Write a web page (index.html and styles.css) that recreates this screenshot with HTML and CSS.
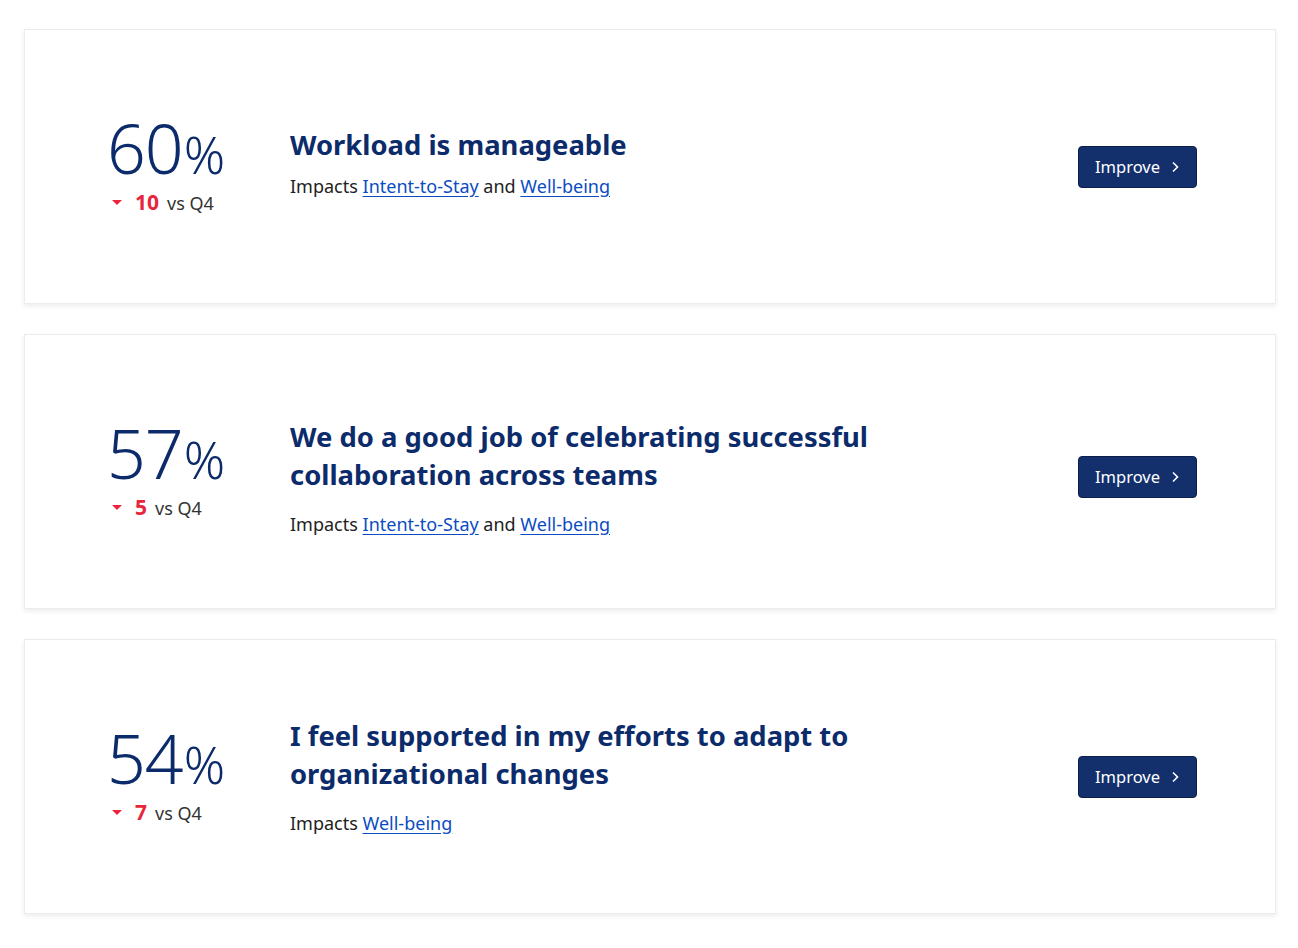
FILE: index.html
```html
<!DOCTYPE html>
<html>
<head>
<meta charset="utf-8">
<link rel="stylesheet" href="styles.css">
</head>
<body>
<div class="list">
  <div class="card">
    <div class="score">
      <div class="pct"><span class="num">60</span><span class="sign">%</span></div>
      <div class="delta"><span class="tri"></span><span class="dval">10</span><span class="vs">vs Q4</span></div>
    </div>
    <div class="body">
      <h2 class="title">Workload is manageable</h2>
      <p class="impacts">Impacts <a href="#">Intent-to-Stay</a> and <a href="#">Well-being</a></p>
    </div>
    <button class="btn">Improve <svg width="10" height="12" viewBox="0 0 10 12"><path d="M3 1.5 L7.5 6 L3 10.5" fill="none" stroke="#fff" stroke-width="1.6"/></svg></button>
  </div>
  <div class="card">
    <div class="score">
      <div class="pct"><span class="num">57</span><span class="sign">%</span></div>
      <div class="delta"><span class="tri"></span><span class="dval">5</span><span class="vs">vs Q4</span></div>
    </div>
    <div class="body">
      <h2 class="title">We do a good job of celebrating successful collaboration across teams</h2>
      <p class="impacts">Impacts <a href="#">Intent-to-Stay</a> and <a href="#">Well-being</a></p>
    </div>
    <button class="btn">Improve <svg width="10" height="12" viewBox="0 0 10 12"><path d="M3 1.5 L7.5 6 L3 10.5" fill="none" stroke="#fff" stroke-width="1.6"/></svg></button>
  </div>
  <div class="card">
    <div class="score">
      <div class="pct"><span class="num">54</span><span class="sign">%</span></div>
      <div class="delta"><span class="tri"></span><span class="dval">7</span><span class="vs">vs Q4</span></div>
    </div>
    <div class="body">
      <h2 class="title">I feel supported in my efforts to adapt to organizational changes</h2>
      <p class="impacts">Impacts <a href="#">Well-being</a></p>
    </div>
    <button class="btn">Improve <svg width="10" height="12" viewBox="0 0 10 12"><path d="M3 1.5 L7.5 6 L3 10.5" fill="none" stroke="#fff" stroke-width="1.6"/></svg></button>
  </div>
</div>
</body>
</html>
```
FILE: styles.css
```css
html, body {
  margin: 0;
  padding: 0;
  background: #ffffff;
  font-family: "Noto Sans", "Open Sans", sans-serif;
}
.list {
  display: flex;
  flex-direction: column;
  gap: 30px;
  padding: 29px 22px 30px 24px;
}
.card {
  height: 275px;
  box-sizing: border-box;
  border: 1px solid #ececec;
  box-shadow: 0 2px 5px rgba(0, 0, 0, 0.08);
  background: #fff;
  display: flex;
  align-items: center;
  padding: 0 78px 0 82px;
}
.score {
  width: 183px;
  flex: none;
  color: #0c2b6b;
  margin-top: -5px;
}
.pct {
  line-height: 1;
  white-space: nowrap;
}
.num {
  font-size: 68px;
  font-weight: 300;
  letter-spacing: -1px;
}
.sign {
  font-size: 51px;
  font-weight: 300;
  margin-left: 1px;
}
.delta {
  display: flex;
  align-items: baseline;
  margin-top: 9px;
  padding-left: 5px;
  line-height: 1.1;
}
.tri {
  width: 0;
  height: 0;
  border-left: 5px solid transparent;
  border-right: 5px solid transparent;
  border-top: 5px solid #e8253d;
  margin-right: 13px;
  align-self: center;
}
.dval {
  color: #e8253d;
  font-weight: 700;
  font-size: 21px;
  margin-right: 8px;
}
.vs {
  color: #333;
  font-size: 18px;
}
.body {
  flex: 1;
  max-width: 600px;
}
.card:nth-child(1) .body {
  margin-bottom: 10px;
}
.card:nth-child(2) .body {
  margin-top: 10px;
}
.card:nth-child(3) .body {
  margin-bottom: 2px;
}
.title {
  margin: 0;
  font-size: 27.4px;
  line-height: 38px;
  font-weight: 700;
  color: #0c2b6b;
}
.impacts {
  margin: 10px 0 0;
  font-size: 18px;
  color: #222;
}
.card:nth-child(n+2) .impacts {
  margin-top: 18px;
}
.impacts a {
  color: #0a4cc2;
  text-decoration: underline;
  text-underline-offset: 3px;
}
.btn {
  margin-left: auto;
  flex: none;
  width: 119px;
  height: 42px;
  background: #13306d;
  color: #fff;
  border: 1px solid #0a1f4a;
  border-radius: 4px;
  font-family: inherit;
  font-size: 16.5px;
  display: flex;
  align-items: center;
  justify-content: center;
  gap: 10px;
  cursor: pointer;
}
.card:nth-child(2) .btn {
  margin-top: 10px;
}
```
